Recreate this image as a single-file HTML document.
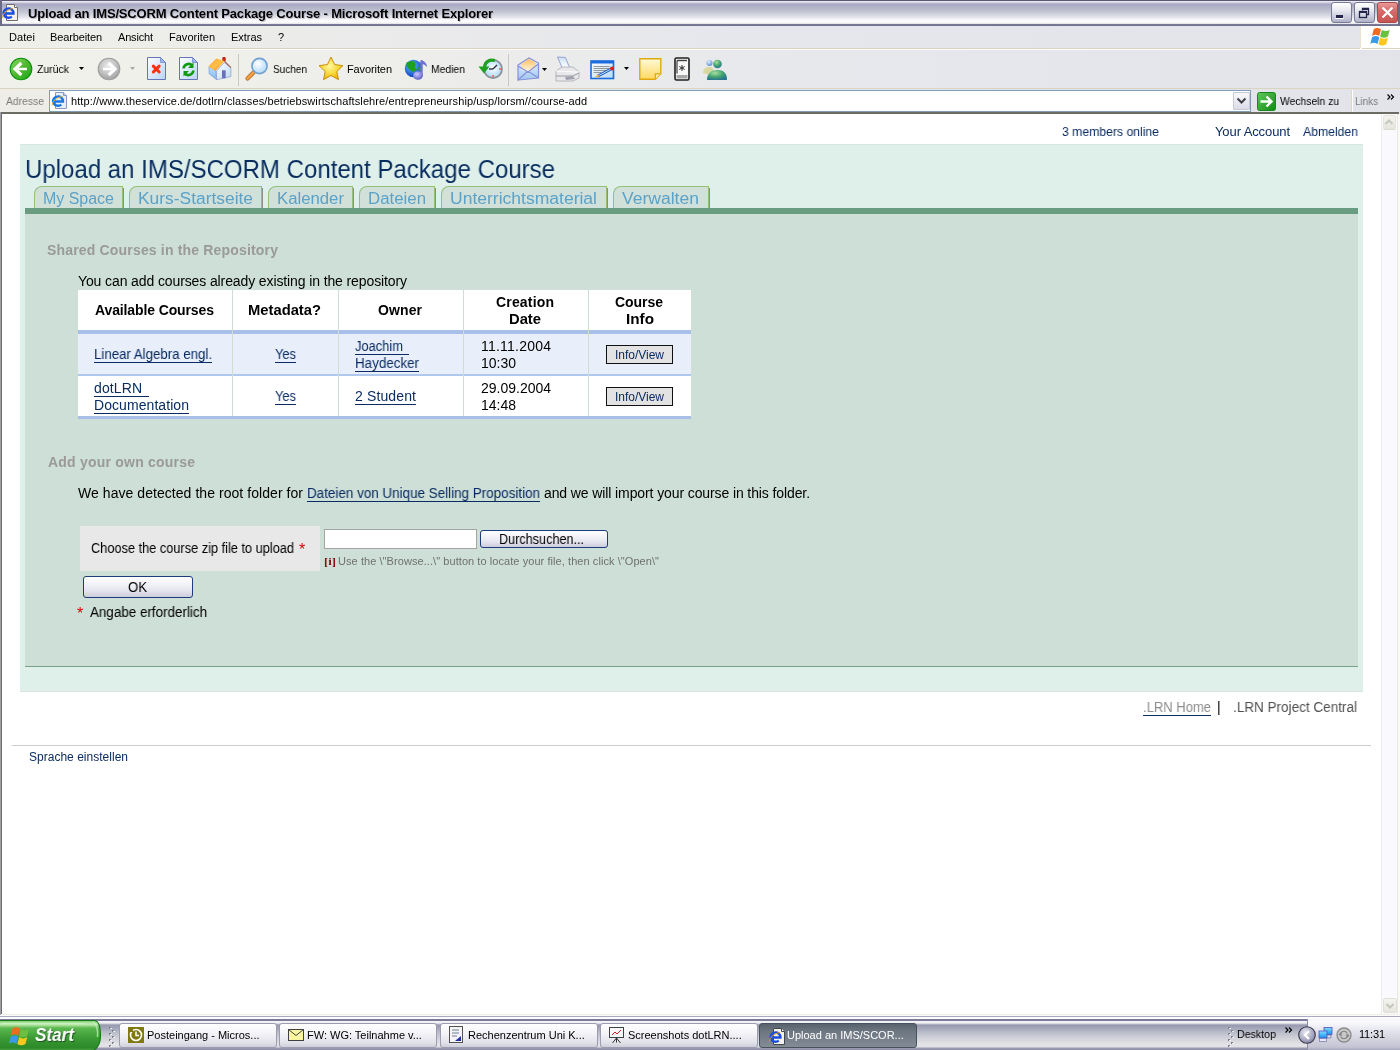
<!DOCTYPE html>
<html><head><meta charset="utf-8"><title>Upload an IMS/SCORM Content Package Course</title>
<style>
*{margin:0;padding:0;box-sizing:border-box}
html,body{width:1400px;height:1050px;overflow:hidden;background:#fff;font-family:"Liberation Sans",sans-serif;font-size:11px;color:#000}
.a{position:absolute;white-space:nowrap;will-change:transform}
svg{position:absolute;overflow:visible}
</style></head><body>
<div class="a" style="left:0px;top:0px;width:1400px;height:26px;background:linear-gradient(#5a5870 0,#5a5870 1px,#f0f0f6 1px,#e0e0ea 2px,#a8a8c4 4px,#b0b2c6 7px,#c4c6d4 12px,#e2e3ea 17px,#f8f8fc 20px,#fff 22px,#ececee 23px,#e4e4e8 24px,#808098 24px,#727292 25px,#727292 26px)"></div>
<div class="a" style="left:0px;top:0px;width:2px;height:26px;background:#6a6a84"></div>
<div class="a" style="left:1398px;top:0px;width:2px;height:26px;background:#6a6a84"></div>
<svg style="left:1px;top:4px" width="19" height="18" viewBox="0 0 19 18">
<path d="M5.5 .5h8l3 3v13h-11z" fill="#f4f2ea" stroke="#6c6c6c"/>
<path d="M13.5 .5v3h3" fill="#fff" stroke="#6c6c6c"/>
<path d="M3 9.5h9.5A5 4.6 0 1 0 10.8 12.6" fill="none" stroke="#1a4ee0" stroke-width="2.4"/>
<path d="M1.5 13.5C2 9 6 5.5 12 4.5" stroke="#e8a020" stroke-width="1" fill="none"/>
</svg>
<div class="a" style="left:28px;top:7px;font-size:13px;line-height:13px;color:#000;font-weight:bold;letter-spacing:-0.165px;text-shadow:1px 1px 0 rgba(160,160,180,.6);">Upload an IMS/SCORM Content Package Course - Microsoft Internet Explorer</div>
<div class="a" style="left:1331px;top:2px;width:21px;height:21px;background:linear-gradient(#ffffff,#e8e8f0 40%,#c4c6d8 80%,#aeb0c6);border:1px solid #7a7a98;border-radius:3px;"></div>
<div class="a" style="left:1354px;top:2px;width:21px;height:21px;background:linear-gradient(#ffffff,#e8e8f0 40%,#c4c6d8 80%,#aeb0c6);border:1px solid #7a7a98;border-radius:3px;"></div>
<div class="a" style="left:1377px;top:2px;width:21px;height:21px;background:linear-gradient(#e89a98,#d66c6a 40%,#c85452);border:1px solid #a84848;border-radius:3px;"></div>
<svg style="left:1331px;top:2px" width="21" height="21"><rect x="5" y="13" width="7" height="3" fill="#24244a"/><path d="M4.5 16.5h8" stroke="#fff"/></svg>
<svg style="left:1354px;top:2px" width="21" height="21"><rect x="5.5" y="9.5" width="7" height="6" fill="none" stroke="#24244a" stroke-width="1.3"/><rect x="5" y="9" width="8" height="2" fill="#24244a"/><path d="M8.5 8.5v-2h6v6h-2" fill="none" stroke="#24244a" stroke-width="1.3"/><rect x="8" y="6" width="7" height="2" fill="#24244a"/></svg>
<svg style="left:1377px;top:2px" width="21" height="21"><path d="M5.5 5.5l10 10M15.5 5.5l-10 10" stroke="#fff" stroke-width="2.2"/></svg>
<div class="a" style="left:0px;top:26px;width:1400px;height:22px;background:linear-gradient(90deg,#efefea 0,#ebebea 300px,#e6e7ec 700px,#e3e4ea 1400px)"></div>
<div class="a" style="left:0px;top:48px;width:1360px;height:1px;background:#d9d4bf"></div>
<div class="a" style="left:0px;top:49px;width:1400px;height:1px;background:#fbfbfb"></div>
<div class="a" style="left:1360px;top:26px;width:40px;height:22px;background:#fff;border-left:1px solid #e8e4d0"></div>
<div class="a" style="left:1362px;top:48px;width:38px;height:1px;background:#d9d4bf"></div>
<div class="a" style="left:9px;top:32px;font-size:11px;line-height:11px;color:#000;letter-spacing:0.080px;">Datei</div>
<div class="a" style="left:50px;top:32px;font-size:11px;line-height:11px;color:#000;letter-spacing:-0.134px;">Bearbeiten</div>
<div class="a" style="left:118px;top:32px;font-size:11px;line-height:11px;color:#000;letter-spacing:-0.179px;">Ansicht</div>
<div class="a" style="left:169px;top:32px;font-size:11px;line-height:11px;color:#000;letter-spacing:0.018px;">Favoriten</div>
<div class="a" style="left:231px;top:32px;font-size:11px;line-height:11px;color:#000;letter-spacing:-0.035px;">Extras</div>
<div class="a" style="left:278px;top:32px;font-size:11px;line-height:11px;color:#000;">?</div>
<svg style="left:1370px;top:26px" width="22" height="19" viewBox="0 0 19 17">
<path d="M3 3c2-1.5 4-1.5 6.5 0l-1.6 6c-2.5-1.5-4.5-1.5-6.5 0z" fill="#f06a20"/>
<path d="M10.3 3.3c2.5 1.5 4.5 1.5 7 0l-1.6 6c-2.5 1.5-4.5 1.5-7 0z" fill="#6cc040"/>
<path d="M1.5 10c2-1.5 4-1.5 6.5 0l-1.6 6c-2.5-1.5-4.5-1.5-6.5 0z" fill="#3a9ae8"/>
<path d="M8.8 10.3c2.5 1.5 4.5 1.5 7 0l-1.6 6c-2.5 1.5-4.5 1.5-7 0z" fill="#f8c820"/>
</svg>
<div class="a" style="left:0px;top:50px;width:1400px;height:38px;background:linear-gradient(90deg,#f1f1ec 0,#eeeeea 350px,#e7e8ec 800px,#e3e4ea 1400px)"></div>
<div class="a" style="left:0px;top:88px;width:1400px;height:1px;background:#d9d4bf"></div>
<div class="a" style="left:238px;top:54px;width:1px;height:32px;background:#c8c8c4"></div>
<div class="a" style="left:508px;top:54px;width:1px;height:32px;background:#c8c8c4"></div>
<div class="a" style="left:37px;top:64px;font-size:11px;line-height:11px;color:#000;transform:scaleX(0.9518);transform-origin:0 0;">Zurück</div>
<div class="a" style="left:273px;top:64px;font-size:11px;line-height:11px;color:#000;transform:scaleX(0.9113);transform-origin:0 0;">Suchen</div>
<div class="a" style="left:347px;top:64px;font-size:11px;line-height:11px;color:#000;letter-spacing:-0.107px;">Favoriten</div>
<div class="a" style="left:431px;top:64px;font-size:11px;line-height:11px;color:#000;transform:scaleX(0.9424);transform-origin:0 0;">Medien</div>
<svg style="left:79px;top:67px" width="6" height="4"><path d="M0 0h5l-2.5 3z" fill="#000"/></svg>
<svg style="left:130px;top:67px" width="6" height="4"><path d="M0 0h5l-2.5 3z" fill="#a8a8a8"/></svg>
<svg style="left:542px;top:68px" width="6" height="4"><path d="M0 0h5l-2.5 3z" fill="#000"/></svg>
<svg style="left:624px;top:67px" width="6" height="4"><path d="M0 0h5l-2.5 3z" fill="#000"/></svg>
<svg style="left:9px;top:57px" width="24" height="24" viewBox="0 0 24 24">
<defs><linearGradient id="gb" x1="0" y1="0" x2="1" y2="1"><stop offset="0" stop-color="#8ad868"/><stop offset=".5" stop-color="#50b830"/><stop offset="1" stop-color="#18a818"/></linearGradient>
<radialGradient id="gf" cx="45%" cy="35%" r="65%"><stop offset="0" stop-color="#ececec"/><stop offset=".6" stop-color="#c2c2c2"/><stop offset="1" stop-color="#a0a0a0"/></radialGradient>
<linearGradient id="pg" x1="0" y1="0" x2="1" y2="1"><stop offset="0" stop-color="#ffffff"/><stop offset="1" stop-color="#b8d4f8"/></linearGradient></defs>
<circle cx="12" cy="12" r="10.8" fill="url(#gb)" stroke="#0a900a" stroke-width="1.1"/>
<path d="M12.4 6L6 12l6.4 6" stroke="#fff" stroke-width="3.1" fill="none" stroke-linejoin="miter"/>
<path d="M9 12h9" stroke="#fff" stroke-width="2.5"/>
</svg>
<svg style="left:97px;top:57px" width="24" height="24" viewBox="0 0 24 24">
<circle cx="12" cy="12" r="10.8" fill="url(#gf)" stroke="#a0a0a0" stroke-width="1.1"/>
<path d="M11.6 6L18 12l-6.4 6" stroke="#fff" stroke-width="3.1" fill="none"/>
<path d="M15 12H6" stroke="#fff" stroke-width="2.5"/>
</svg>
<svg style="left:147px;top:57px" width="20" height="24" viewBox="0 0 20 24">
<path d="M.5 .5h13l5 5v17H.5z" fill="url(#pg)" stroke="#6874b8"/>
<path d="M13.5 .5v5h5z" fill="#98b8f0" stroke="#6874b8" stroke-width=".6"/>
<path d="M6.3 9.1l5.9 5.9M12.2 9.1l-5.9 5.9" stroke="#ff3010" stroke-width="3" stroke-linecap="round"/>
</svg>
<svg style="left:179px;top:57px" width="20" height="24" viewBox="0 0 20 24">
<path d="M.5 .5h13l5 5v17H.5z" fill="url(#pg)" stroke="#6874b8"/>
<path d="M13.5 .5v5h5z" fill="#98b8f0" stroke="#6874b8" stroke-width=".6"/>
<path d="M4.6 11.5a5 5 0 0 1 8.6-3" stroke="#109a10" stroke-width="2.6" fill="none"/><path d="M14.5 5.5v5.5h-5.5z" fill="#109a10"/>
<path d="M14.4 13.5a5 5 0 0 1-8.6 3" stroke="#109a10" stroke-width="2.6" fill="none"/><path d="M4.5 19.5V14h5.5z" fill="#109a10"/>
</svg>
<svg style="left:204px;top:54px" width="30" height="30" viewBox="0 0 30 30">
<defs><linearGradient id="hr" x1="0" y1="0" x2="1" y2="1"><stop offset="0" stop-color="#ffa030"/><stop offset=".5" stop-color="#ffc048"/><stop offset="1" stop-color="#f08818"/></linearGradient>
<linearGradient id="hw" x1="0" y1="0" x2="1" y2="1"><stop offset="0" stop-color="#ffffff"/><stop offset="1" stop-color="#b8d8f0"/></linearGradient>
<linearGradient id="hl" x1="0" y1="0" x2="0" y2="1"><stop offset="0" stop-color="#b8e0ff"/><stop offset="1" stop-color="#80b8f0"/></linearGradient></defs>
<path d="M5 12.9L12 16.9 12.6 25.7 5.1 19.7z" fill="url(#hl)" stroke="#7090d0" stroke-width=".6"/>
<path d="M12.6 16.9L20.3 8.6 26.9 13.7V22.6L12.6 25.7z" fill="url(#hw)" stroke="#8090c8" stroke-width=".6"/>
<path d="M20.6 7.3L26.9 13.7" stroke="#a06050" stroke-width="1.2"/>
<rect x="18.3" y="2.9" width="3.4" height="4.6" rx="1" fill="#c02810"/>
<path d="M4.3 12.6L12.3 4.6 20.6 7.1 11.4 16.9z" fill="url(#hr)"/>
<rect x="18" y="16.3" width="3.7" height="8" fill="#6c70b8"/>
</svg>
<svg style="left:245px;top:57px" width="24" height="24" viewBox="0 0 24 24">
<defs><radialGradient id="sl" cx="40%" cy="35%" r="60%"><stop offset="0" stop-color="#ffffff"/><stop offset="1" stop-color="#b8dcf8"/></radialGradient></defs>
<path d="M2.5 21.5l6-6" stroke="#b86820" stroke-width="4.2" stroke-linecap="round"/>
<path d="M2.5 21.5l6-6" stroke="#f0a048" stroke-width="2.6" stroke-linecap="round"/>
<circle cx="14.5" cy="9" r="7.6" fill="url(#sl)" stroke="#70a0d0" stroke-width="1.6"/>
</svg>
<svg style="left:318px;top:56px" width="26" height="25" viewBox="0 0 26 25">
<defs><radialGradient id="st" cx="45%" cy="40%" r="60%"><stop offset="0" stop-color="#fff8a0"/><stop offset=".6" stop-color="#f8d838"/><stop offset="1" stop-color="#e8b010"/></radialGradient></defs>
<path d="M13 1l3.6 7.6 8.4 1-6.2 5.8 1.7 8.3L13 19.5l-7.5 4.2 1.7-8.3L1 9.6l8.4-1z" fill="url(#st)" stroke="#c89010" stroke-width="1"/>
</svg>
<svg style="left:404px;top:59px" width="26" height="22" viewBox="0 0 26 22">
<defs><radialGradient id="gl" cx="40%" cy="35%" r="65%"><stop offset="0" stop-color="#60c8ff"/><stop offset="1" stop-color="#1040c0"/></radialGradient>
<radialGradient id="nt" cx="40%" cy="35%" r="65%"><stop offset="0" stop-color="#c8c8ff"/><stop offset="1" stop-color="#6060c8"/></radialGradient></defs>
<circle cx="9.5" cy="9.5" r="8.7" fill="url(#gl)"/>
<path d="M3 3.5c3-2 6-2 8 0s-1 5 1 6-2 4-4 3-4-3-5-5-1-3 0-4z" fill="#20a020"/>
<path d="M14 8c2 0 4 1 4 3l-3 2z" fill="#20a020"/>
<path d="M17.5 1.5v15" stroke="#7070d0" stroke-width="2.4"/><path d="M17 1c3 1 6 3 6 7-2-2-3-3-5.5-3" fill="#7070d0"/>
<ellipse cx="14" cy="16.5" rx="5" ry="4.2" fill="url(#nt)"/>
</svg>
<svg style="left:477px;top:57px" width="26" height="24" viewBox="0 0 26 24">
<defs><radialGradient id="hc" cx="50%" cy="45%" r="55%"><stop offset="0" stop-color="#ffffff"/><stop offset="1" stop-color="#a8d8f8"/></radialGradient></defs>
<circle cx="16" cy="12" r="9" fill="url(#hc)" stroke="#909098" stroke-width="1.8"/>
<path d="M16 12l4-4" stroke="#303040" stroke-width="1.4"/><path d="M16 12h-4" stroke="#303040" stroke-width="1.4"/>
<circle cx="23" cy="12" r=".9" fill="#ff5030"/><circle cx="16" cy="19" r=".9" fill="#ff5030"/>
<path d="M18 3.5C12 2 8 5 7.5 10" stroke="#20a020" stroke-width="3.2" fill="none"/>
<path d="M1.5 9.5h11l-5.5 7z" fill="#20a020"/>
</svg>
<svg style="left:517px;top:57px" width="23" height="24" viewBox="0 0 23 24">
<defs><linearGradient id="ml" x1="0" y1="0" x2="0" y2="1"><stop offset="0" stop-color="#e8f4ff"/><stop offset="1" stop-color="#a0c8f0"/></linearGradient>
<linearGradient id="lt" x1="0" y1="0" x2="0" y2="1"><stop offset="0" stop-color="#f8c060"/><stop offset="1" stop-color="#fff8e8"/></linearGradient></defs>
<path d="M1 8l11-7 9.5 5v15L1 23z" fill="url(#ml)" stroke="#8890d8" stroke-width="1.2"/>
<path d="M4 7l8-5 7 4v5l-8 4-7-2z" fill="url(#lt)"/>
<path d="M1 23l9-8 3 .5 8.5 5.5" fill="none" stroke="#8890d8" stroke-width="1.2"/>
<path d="M1 9l10 6 10.5-8" fill="none" stroke="#8890d8" stroke-width="1.2"/>
</svg>
<svg style="left:555px;top:56px" width="25" height="26" viewBox="0 0 25 26">
<defs><linearGradient id="pp" x1="0" y1="0" x2="0" y2="1"><stop offset="0" stop-color="#c8e0f8"/><stop offset="1" stop-color="#ffffff"/></linearGradient></defs>
<path d="M2.5 1l8 .5 4 10H7z" fill="url(#pp)" stroke="#8890c8" stroke-width=".8"/>
<path d="M1 15l6-4h11l6 5v6l-6 3H1z" fill="#e8e8ec" stroke="#a8a8b0" stroke-width=".8"/>
<path d="M1 15l17 1 6 0" fill="none" stroke="#fff" stroke-width="1"/>
<path d="M1 20h17l6-3" fill="none" stroke="#9898a0" stroke-width="1"/>
<path d="M10 21l8-1 2 3-9 1z" fill="#a0a0b0"/>
</svg>
<svg style="left:590px;top:60px" width="25" height="20" viewBox="0 0 25 20">
<defs><linearGradient id="ed" x1="0" y1="0" x2="1" y2="1"><stop offset="0" stop-color="#ffffff"/><stop offset="1" stop-color="#b8d8f8"/></linearGradient></defs>
<rect x="1" y="1" width="22.5" height="17.5" fill="url(#ed)" stroke="#1a6ae0" stroke-width="1.6"/>
<rect x="1" y="1" width="22.5" height="2.5" fill="#1a6ae0"/>
<path d="M3.5 6.5h16M3.5 8.5h16M3.5 10.5h13M3.5 12.5h8" stroke="#8c8c90" stroke-width=".9"/>
<path d="M8 16l13-7" stroke="#2060d0" stroke-width="2.8"/><path d="M8 16l13-7" stroke="#c0d8f8" stroke-width="1"/>
<circle cx="22" cy="8.5" r="2" fill="#e02020"/>
<path d="M6.5 17.5l2-2.5" stroke="#e8b048" stroke-width="2.2"/>
</svg>
<svg style="left:639px;top:58px" width="23" height="22" viewBox="0 0 23 22">
<defs><linearGradient id="nn" x1="0" y1="0" x2="0" y2="1"><stop offset="0" stop-color="#fffad8"/><stop offset="1" stop-color="#ffd860"/></linearGradient></defs>
<path d="M.8 .8h21v15l-5.5 5.5H.8z" fill="url(#nn)" stroke="#e0a810" stroke-width="1.4"/>
<path d="M16.3 21.3v-5.5h5.5" fill="#ffe8a0" stroke="#e0a810" stroke-width="1.2"/>
</svg>
<svg style="left:674px;top:57px" width="16" height="24" viewBox="0 0 16 24">
<rect x="1" y="1" width="14" height="22" rx="1.5" fill="#f8f8f8" stroke="#202020" stroke-width="1.6"/>
<path d="M3 3.5h10" stroke="#404040" stroke-width="1.4"/><path d="M3 3.5v13" stroke="#404040" stroke-width="1.2"/>
<path d="M8 8v6M5.3 9.5l5.4 3M10.7 9.5l-5.4 3" stroke="#303030" stroke-width="1"/>
<rect x="2.5" y="18" width="11" height="3.5" fill="#a8a8a8"/>
</svg>
<svg style="left:702px;top:59px" width="25" height="21" viewBox="0 0 25 21">
<defs><radialGradient id="mg" cx="40%" cy="30%" r="70%"><stop offset="0" stop-color="#a8e0a0"/><stop offset=".6" stop-color="#40a070"/><stop offset="1" stop-color="#2a7890"/></radialGradient>
<radialGradient id="mb" cx="40%" cy="30%" r="70%"><stop offset="0" stop-color="#e0f0ff"/><stop offset="1" stop-color="#5a90d0"/></radialGradient></defs>
<circle cx="7.5" cy="4" r="3" fill="url(#mb)"/>
<path d="M1 14c0-4 3-6 6.5-6s4 2 4 4l-3 4z" fill="#d8d8a0"/>
<circle cx="15.5" cy="5" r="4.3" fill="url(#mg)"/>
<path d="M5 21c0-7 4.5-10 10.5-10S25 14 25 21z" fill="url(#mg)"/>
</svg>
<div class="a" style="left:0px;top:89px;width:1400px;height:23px;background:linear-gradient(90deg,#eeede7 0,#ebebe9 300px,#e6e7ec 700px,#e3e4ea 1400px)"></div>
<div class="a" style="left:6px;top:96px;font-size:11px;line-height:11px;color:#7c7c7c;transform:scaleX(0.9417);transform-origin:0 0;">Adresse</div>
<div class="a" style="left:49px;top:90px;width:1202px;height:22px;background:#fff;border:1px solid #7f9db9"></div>
<svg style="left:51px;top:92px" width="18" height="18" viewBox="0 0 18 18">
<path d="M4.5 .5h8l3 3v13h-11z" fill="#e8eef8" stroke="#8898c0"/>
<path d="M12.5 .5v3h3" fill="#c8d4f0" stroke="#8898c0"/>
<path d="M2.5 9.5h9.5A5 4.6 0 1 0 10.3 12.6" fill="none" stroke="#1a78e0" stroke-width="2.4"/>
<path d="M1 13.5C1.5 9 5.5 5.5 11.5 4.5" stroke="#f0b030" stroke-width="1" fill="none"/>
</svg>
<div class="a" style="left:71px;top:96px;font-size:11px;line-height:11px;color:#000;letter-spacing:0.096px;">http://www.theservice.de/dotlrn/classes/betriebswirtschaftslehre/entrepreneurship/usp/lorsm//course-add</div>
<div class="a" style="left:1233px;top:92px;width:17px;height:18px;background:linear-gradient(#f8f8fc,#dcdce8);border:1px solid #c4c8d8;border-radius:1px"></div>
<svg style="left:1236px;top:97px" width="11" height="8"><path d="M1.5 1.5l4 4 4-4" stroke="#404048" stroke-width="2" fill="none"/></svg>
<svg style="left:1257px;top:92px" width="19" height="19" viewBox="0 0 19 19">
<defs><linearGradient id="gg" x1="0" y1="0" x2="1" y2="1"><stop offset="0" stop-color="#60c860"/><stop offset="1" stop-color="#108a10"/></linearGradient></defs>
<rect x=".5" y=".5" width="18" height="18" rx="2" fill="url(#gg)" stroke="#188818"/>
<path d="M3.5 9.5h10M9.5 4.5l5 5-5 5" stroke="#fff" stroke-width="2.4" fill="none"/>
</svg>
<div class="a" style="left:1280px;top:96px;font-size:11px;line-height:11px;color:#000;transform:scaleX(0.9399);transform-origin:0 0;">Wechseln zu</div>
<div class="a" style="left:1351px;top:90px;width:1px;height:22px;background:#dcd8c4"></div>
<div class="a" style="left:1352px;top:90px;width:1px;height:22px;background:#fff"></div>
<div class="a" style="left:1355px;top:96px;font-size:11px;line-height:11px;color:#7c7c7c;transform:scaleX(0.8956);transform-origin:0 0;">Links</div>
<svg style="left:1387px;top:94px" width="9" height="7"><path d="M.5 .5l2.5 2.5-2.5 2.5M4 .5l2.5 2.5L4 5.5" stroke="#000" stroke-width="1.2" fill="none"/></svg>
<div class="a" style="left:0px;top:112px;width:1399px;height:2px;background:#6c6c62"></div>
<div class="a" style="left:0px;top:112px;width:1px;height:904px;background:#a09ea8"></div>
<div class="a" style="left:1px;top:112px;width:1px;height:902px;background:#6c6c62"></div>
<div class="a" style="left:1398px;top:114px;width:2px;height:902px;background:#fafaf4"></div>
<div class="a" style="left:1399px;top:112px;width:1px;height:2px;background:#e8e8ee"></div>
<div class="a" style="left:2px;top:114px;width:1379px;height:900px;background:#fff"></div>
<div class="a" style="left:1381px;top:114px;width:17px;height:900px;background:#fafafe;border-left:1px solid #ececf0;border-right:1px solid #e8e8e0"></div>
<div class="a" style="left:1383px;top:115px;width:13px;height:14px;background:linear-gradient(#f4f4ee,#e6e6de);border:1px solid #e4e4dc;border-radius:2px;box-shadow:0 1px 0 #d8dccc"></div>
<svg style="left:1384px;top:118px" width="10" height="8"><path d="M1.5 6l3.5-3.5L8.5 6" stroke="#c4c8bc" stroke-width="2" fill="none"/></svg>
<div class="a" style="left:1383px;top:998px;width:14px;height:15px;background:linear-gradient(#f4f4ee,#e6e6de);border:1px solid #e0e0d8;border-radius:2px"></div>
<svg style="left:1385px;top:1002px" width="10" height="8"><path d="M1.5 2l3.5 3.5L8.5 2" stroke="#c4c8bc" stroke-width="2" fill="none"/></svg>
<div class="a" style="left:1062px;top:125px;font-size:13px;line-height:13px;color:#0b2c62;transform:scaleX(0.9388);transform-origin:0 0;">3 members online</div>
<div class="a" style="left:1215px;top:125px;font-size:13px;line-height:13px;color:#0b2c62;letter-spacing:-0.103px;">Your Account</div>
<div class="a" style="left:1303px;top:125px;font-size:13px;line-height:13px;color:#0b2c62;transform:scaleX(0.9396);transform-origin:0 0;">Abmelden</div>
<div class="a" style="left:20px;top:144px;width:1343px;height:547px;background:#dff0eb;border-top:1px solid #d4e8e0"></div>
<div class="a" style="left:20px;top:691px;width:1343px;height:1px;background:#d8e4de"></div>
<div class="a" style="left:25px;top:156px;font-size:26px;line-height:26px;color:#082c5e;transform:scaleX(0.9238);transform-origin:0 0;">Upload an IMS/SCORM Content Package Course</div>
<div class="a" style="left:34px;top:186px;width:89px;height:23px;background:#d2e0da;border:1px solid #94c07a;border-bottom:none;border-top-left-radius:8px;"></div>
<div class="a" style="left:123px;top:188px;width:1px;height:21px;background:#8c8c8c"></div>
<div class="a" style="left:43px;top:191px;font-size:16px;line-height:16px;color:#5aa2c8;letter-spacing:-0.020px;">My Space</div>
<div class="a" style="left:129px;top:186px;width:133px;height:23px;background:#d2e0da;border:1px solid #94c07a;border-bottom:none;border-top-left-radius:8px;"></div>
<div class="a" style="left:262px;top:188px;width:1px;height:21px;background:#8c8c8c"></div>
<div class="a" style="left:138px;top:191px;font-size:16px;line-height:16px;color:#5aa2c8;transform:scaleX(1.0868);transform-origin:0 0;">Kurs-Startseite</div>
<div class="a" style="left:268px;top:186px;width:85px;height:23px;background:#d2e0da;border:1px solid #94c07a;border-bottom:none;border-top-left-radius:8px;"></div>
<div class="a" style="left:353px;top:188px;width:1px;height:21px;background:#8c8c8c"></div>
<div class="a" style="left:277px;top:191px;font-size:16px;line-height:16px;color:#5aa2c8;transform:scaleX(1.0461);transform-origin:0 0;">Kalender</div>
<div class="a" style="left:359px;top:186px;width:76px;height:23px;background:#d2e0da;border:1px solid #94c07a;border-bottom:none;border-top-left-radius:8px;"></div>
<div class="a" style="left:435px;top:188px;width:1px;height:21px;background:#8c8c8c"></div>
<div class="a" style="left:368px;top:191px;font-size:16px;line-height:16px;color:#5aa2c8;transform:scaleX(1.0517);transform-origin:0 0;">Dateien</div>
<div class="a" style="left:441px;top:186px;width:166px;height:23px;background:#d2e0da;border:1px solid #94c07a;border-bottom:none;border-top-left-radius:8px;"></div>
<div class="a" style="left:607px;top:188px;width:1px;height:21px;background:#8c8c8c"></div>
<div class="a" style="left:450px;top:191px;font-size:16px;line-height:16px;color:#5aa2c8;transform:scaleX(1.0949);transform-origin:0 0;">Unterrichtsmaterial</div>
<div class="a" style="left:613px;top:186px;width:96px;height:23px;background:#d2e0da;border:1px solid #94c07a;border-bottom:none;border-top-left-radius:8px;"></div>
<div class="a" style="left:709px;top:188px;width:1px;height:21px;background:#8c8c8c"></div>
<div class="a" style="left:622px;top:191px;font-size:16px;line-height:16px;color:#5aa2c8;transform:scaleX(1.0958);transform-origin:0 0;">Verwalten</div>
<div class="a" style="left:25px;top:208px;width:1333px;height:6px;background:#6a9c82"></div>
<div class="a" style="left:25px;top:214px;width:1333px;height:452px;background:#cddfd6"></div>
<div class="a" style="left:25px;top:666px;width:1333px;height:1px;background:#78a08a"></div>
<div class="a" style="left:47px;top:243px;font-size:14px;line-height:14px;color:#9a9a9a;font-weight:bold;letter-spacing:0.174px;">Shared Courses in the Repository</div>
<div class="a" style="left:78px;top:274px;font-size:14px;line-height:14px;color:#000;letter-spacing:-0.111px;">You can add courses already existing in the repository</div>
<div class="a" style="left:78px;top:290px;width:613px;height:127px;background:#fff"></div>
<div class="a" style="left:78px;top:334px;width:613px;height:41px;background:#e8effa"></div>
<div class="a" style="left:78px;top:330px;width:613px;height:4px;background:#a8c0e8"></div>
<div class="a" style="left:78px;top:374px;width:613px;height:2px;background:#b0c8ec"></div>
<div class="a" style="left:78px;top:416px;width:613px;height:3px;background:#a8c0e8"></div>
<div class="a" style="left:232px;top:290px;width:1px;height:126px;background:#d0dcd6"></div>
<div class="a" style="left:338px;top:290px;width:1px;height:126px;background:#d0dcd6"></div>
<div class="a" style="left:463px;top:290px;width:1px;height:126px;background:#d0dcd6"></div>
<div class="a" style="left:588px;top:290px;width:1px;height:126px;background:#d0dcd6"></div>
<div class="a" style="left:95px;top:303px;font-size:14px;line-height:14px;color:#000;font-weight:bold;letter-spacing:-0.117px;">Available Courses</div>
<div class="a" style="left:248px;top:303px;font-size:14px;line-height:14px;color:#000;font-weight:bold;transform:scaleX(1.0544);transform-origin:0 0;">Metadata?</div>
<div class="a" style="left:378px;top:303px;font-size:14px;line-height:14px;color:#000;font-weight:bold;letter-spacing:0.109px;">Owner</div>
<div class="a" style="left:496px;top:295px;font-size:14px;line-height:14px;color:#000;font-weight:bold;letter-spacing:0.173px;">Creation</div>
<div class="a" style="left:509px;top:312px;font-size:14px;line-height:14px;color:#000;font-weight:bold;transform:scaleX(1.0546);transform-origin:0 0;">Date</div>
<div class="a" style="left:615px;top:295px;font-size:14px;line-height:14px;color:#000;font-weight:bold;letter-spacing:-0.047px;">Course</div>
<div class="a" style="left:626px;top:312px;font-size:14px;line-height:14px;color:#000;font-weight:bold;transform:scaleX(1.0914);transform-origin:0 0;">Info</div>
<div class="a" style="left:94px;top:347px;font-size:14px;line-height:14px;color:#0b2c62;transform:scaleX(0.9475);transform-origin:0 0;">Linear Algebra engl.</div>
<div class="a" style="left:94px;top:362px;width:118px;height:1px;background:#0b2c62"></div>
<div class="a" style="left:275px;top:347px;font-size:14px;line-height:14px;color:#0b2c62;transform:scaleX(0.9195);transform-origin:0 0;">Yes</div>
<div class="a" style="left:275px;top:362px;width:21px;height:1px;background:#0b2c62"></div>
<div class="a" style="left:355px;top:339px;font-size:14px;line-height:14px;color:#0b2c62;transform:scaleX(0.9208);transform-origin:0 0;">Joachim</div>
<div class="a" style="left:355px;top:354px;width:54px;height:1px;background:#0b2c62"></div>
<div class="a" style="left:355px;top:356px;font-size:14px;line-height:14px;color:#0b2c62;transform:scaleX(0.9564);transform-origin:0 0;">Haydecker</div>
<div class="a" style="left:355px;top:371px;width:64px;height:1px;background:#0b2c62"></div>
<div class="a" style="left:481px;top:339px;font-size:14px;line-height:14px;color:#000;letter-spacing:0.223px;">11.11.2004</div>
<div class="a" style="left:481px;top:356px;font-size:14px;line-height:14px;color:#000;">10:30</div>
<div class="a" style="left:94px;top:381px;font-size:14px;line-height:14px;color:#0b2c62;letter-spacing:0.106px;">dotLRN</div>
<div class="a" style="left:94px;top:396px;width:55px;height:1px;background:#0b2c62"></div>
<div class="a" style="left:94px;top:398px;font-size:14px;line-height:14px;color:#0b2c62;letter-spacing:0.070px;">Documentation</div>
<div class="a" style="left:94px;top:413px;width:95px;height:1px;background:#0b2c62"></div>
<div class="a" style="left:275px;top:389px;font-size:14px;line-height:14px;color:#0b2c62;transform:scaleX(0.9195);transform-origin:0 0;">Yes</div>
<div class="a" style="left:275px;top:404px;width:21px;height:1px;background:#0b2c62"></div>
<div class="a" style="left:355px;top:389px;font-size:14px;line-height:14px;color:#0b2c62;letter-spacing:0.133px;">2 Student</div>
<div class="a" style="left:355px;top:404px;width:61px;height:1px;background:#0b2c62"></div>
<div class="a" style="left:481px;top:381px;font-size:14px;line-height:14px;color:#000;">29.09.2004</div>
<div class="a" style="left:481px;top:398px;font-size:14px;line-height:14px;color:#000;">14:48</div>
<div class="a" style="left:606px;top:345px;width:67px;height:19px;background:#e2e2e2;border:1px solid #101010"></div>
<div class="a" style="left:615px;top:349px;font-size:12px;line-height:12px;color:#0b2c62;letter-spacing:-0.018px;">Info/View</div>
<div class="a" style="left:606px;top:387px;width:67px;height:19px;background:#e2e2e2;border:1px solid #101010"></div>
<div class="a" style="left:615px;top:391px;font-size:12px;line-height:12px;color:#0b2c62;letter-spacing:-0.018px;">Info/View</div>
<div class="a" style="left:48px;top:455px;font-size:14px;line-height:14px;color:#9a9a9a;font-weight:bold;letter-spacing:0.215px;">Add your own course</div>
<div class="a" style="left:78px;top:486px;font-size:14px;line-height:14px;color:#000;letter-spacing:0.054px;">We have detected the root folder for</div>
<div class="a" style="left:307px;top:486px;font-size:14px;line-height:14px;color:#0b2c62;transform:scaleX(0.9596);transform-origin:0 0;">Dateien von Unique Selling Proposition</div>
<div class="a" style="left:307px;top:501px;width:233px;height:1px;background:#0b2c62"></div>
<div class="a" style="left:544px;top:486px;font-size:14px;line-height:14px;color:#000;letter-spacing:-0.106px;">and we will import your course in this folder.</div>
<div class="a" style="left:80px;top:526px;width:240px;height:45px;background:#e8e8e8"></div>
<div class="a" style="left:91px;top:541px;font-size:14px;line-height:14px;color:#000;transform:scaleX(0.9120);transform-origin:0 0;">Choose the course zip file to upload</div>
<div class="a" style="left:299px;top:542px;font-size:16px;line-height:16px;color:#e00000;">*</div>
<div class="a" style="left:324px;top:529px;width:153px;height:20px;background:#fff;border:1px solid #a4a4a4"></div>
<div class="a" style="left:480px;top:530px;width:128px;height:18px;background:linear-gradient(#ffffff,#f4f4fa 30%,#e4e4ee 70%,#ccccdc);border:1px solid #1c3c7c;border-radius:3px"></div>
<div class="a" style="left:499px;top:532px;font-size:14px;line-height:14px;color:#000;transform:scaleX(0.9027);transform-origin:0 0;">Durchsuchen...</div>
<div class="a" style="left:324px;top:556px;font-size:11px;line-height:11px;color:#801010;font-weight:bold;transform:scaleX(1.1558);transform-origin:0 0;font-family:'Liberation Serif',serif;">[i]</div>
<div class="a" style="left:338px;top:556px;font-size:11px;line-height:11px;color:#707070;letter-spacing:0.067px;">Use the \"Browse...\" button to locate your file, then click \"Open\"</div>
<div class="a" style="left:83px;top:576px;width:110px;height:22px;background:linear-gradient(#ffffff,#f4f4fa 30%,#e4e4ee 70%,#ccccdc);border:1px solid #1c3c7c;border-radius:3px"></div>
<div class="a" style="left:128px;top:580px;font-size:14px;line-height:14px;color:#000;transform:scaleX(0.9393);transform-origin:0 0;">OK</div>
<div class="a" style="left:77px;top:606px;font-size:16px;line-height:16px;color:#e00000;">*</div>
<div class="a" style="left:90px;top:605px;font-size:14px;line-height:14px;color:#000;transform:scaleX(0.9576);transform-origin:0 0;">Angabe erforderlich</div>
<div class="a" style="left:1143px;top:700px;font-size:14px;line-height:14px;color:#8c8c8c;transform:scaleX(0.9298);transform-origin:0 0;">.LRN Home</div>
<div class="a" style="left:1143px;top:715px;width:68px;height:1px;background:#0b2c62"></div>
<div class="a" style="left:1217px;top:700px;font-size:14px;line-height:14px;color:#000;">|</div>
<div class="a" style="left:1233px;top:700px;font-size:14px;line-height:14px;color:#505050;transform:scaleX(0.9659);transform-origin:0 0;">.LRN Project Central</div>
<div class="a" style="left:12px;top:745px;width:1359px;height:1px;background:#cccccc"></div>
<div class="a" style="left:29px;top:751px;font-size:12px;line-height:12px;color:#0b2c62;letter-spacing:0.016px;">Sprache einstellen</div>
<div class="a" style="left:2px;top:1014px;width:1396px;height:1px;background:#f0f0e4"></div>
<div class="a" style="left:0px;top:1015px;width:1400px;height:35px;background:linear-gradient(#fafafa 0,#fafafa 1px,#a8a8c0 1px,#a8a8c0 2px,#fcfcff 2px,#fcfcff 4px,#7c7c98 4px,#7c7c98 6px,#f4f4f8 6px,#f0f0f4 8px,#9898b0 10px,#a8aabc 14px,#b8bcc8 17px,#d0d0d8 23px,#e4e4e8 30px,#e0e0e4 32px,#9c9cb4 33px,#8c8ca4 35px)"></div>
<svg style="left:0;top:1019px" width="101" height="31" viewBox="0 0 101 31">
<defs><linearGradient id="sg" x1="0" y1="0" x2="0" y2="1"><stop offset="0" stop-color="#7ac86a"/><stop offset=".12" stop-color="#c8f0b8"/><stop offset=".25" stop-color="#5cb850"/><stop offset=".6" stop-color="#3a9a34"/><stop offset=".9" stop-color="#2c8a28"/><stop offset="1" stop-color="#4aa040"/></linearGradient></defs>
<path d="M-1 1.5H95C99 2.5 100.5 10 100.5 16.5 100.5 23 98.5 29 93 31.5H-1z" fill="url(#sg)" stroke="#18781a" stroke-width="1.2"/><path d="M93 3C97 6 98 12 97.5 18" stroke="#c8f0c0" stroke-width="1.5" fill="none" opacity=".7"/><path d="M2 4.5H85" stroke="#d8f8d0" stroke-width="1" opacity=".6"/>
</svg>
<svg style="left:9px;top:1025px" width="22" height="20" viewBox="0 0 19 17">
<path d="M3 3c2-1.5 4-1.5 6.5 0l-1.6 6c-2.5-1.5-4.5-1.5-6.5 0z" fill="#f06a20"/>
<path d="M10.3 3.3c2.5 1.5 4.5 1.5 7 0l-1.6 6c-2.5 1.5-4.5 1.5-7 0z" fill="#6cc040"/>
<path d="M1.5 10c2-1.5 4-1.5 6.5 0l-1.6 6c-2.5-1.5-4.5-1.5-6.5 0z" fill="#3a9ae8"/>
<path d="M8.8 10.3c2.5 1.5 4.5 1.5 7 0l-1.6 6c-2.5 1.5-4.5 1.5-7 0z" fill="#f8c820"/>
</svg>
<div class="a" style="left:35px;top:1025px;font-size:19px;line-height:19px;color:#fff;font-weight:bold;transform:scaleX(0.9009);transform-origin:0 0;font-style:italic;text-shadow:1px 1px 1px #205020;">Start</div>
<div class="a" style="left:109px;top:1027px;width:2px;height:2px;background:#80808c"></div>
<div class="a" style="left:110px;top:1028px;width:2px;height:1px;background:#fff;opacity:.8"></div>
<div class="a" style="left:112px;top:1030px;width:2px;height:2px;background:#80808c"></div>
<div class="a" style="left:113px;top:1031px;width:2px;height:1px;background:#fff;opacity:.8"></div>
<div class="a" style="left:109px;top:1033px;width:2px;height:2px;background:#80808c"></div>
<div class="a" style="left:110px;top:1034px;width:2px;height:1px;background:#fff;opacity:.8"></div>
<div class="a" style="left:112px;top:1036px;width:2px;height:2px;background:#80808c"></div>
<div class="a" style="left:113px;top:1037px;width:2px;height:1px;background:#fff;opacity:.8"></div>
<div class="a" style="left:109px;top:1039px;width:2px;height:2px;background:#80808c"></div>
<div class="a" style="left:110px;top:1040px;width:2px;height:1px;background:#fff;opacity:.8"></div>
<div class="a" style="left:112px;top:1042px;width:2px;height:2px;background:#80808c"></div>
<div class="a" style="left:113px;top:1043px;width:2px;height:1px;background:#fff;opacity:.8"></div>
<div class="a" style="left:109px;top:1045px;width:2px;height:2px;background:#80808c"></div>
<div class="a" style="left:110px;top:1046px;width:2px;height:1px;background:#fff;opacity:.8"></div>
<div class="a" style="left:119px;top:1023px;width:158px;height:25px;background:linear-gradient(#ffffff,#f4f4f8 40%,#e2e2ea 80%,#cfcfdb);border:1px solid #9c9cb0;border-radius:3px"></div>
<svg style="left:128px;top:1027px" width="16" height="16"><rect x="0" y="0" width="16" height="16" fill="#807810"/><circle cx="8" cy="8" r="5.5" fill="none" stroke="#fff" stroke-width="1.6"/><path d="M8 4.5v4h3" stroke="#fff" stroke-width="1.5" fill="none"/><rect x="1" y="1" width="4" height="4" fill="#807810"/></svg>
<div class="a" style="left:147px;top:1030px;font-size:11px;line-height:11px;color:#000;">Posteingang - Micros...</div>
<div class="a" style="left:279px;top:1023px;width:158px;height:25px;background:linear-gradient(#ffffff,#f4f4f8 40%,#e2e2ea 80%,#cfcfdb);border:1px solid #9c9cb0;border-radius:3px"></div>
<svg style="left:288px;top:1028px" width="18" height="14"><rect x=".5" y="1.5" width="15" height="11" fill="#f8f4a0" stroke="#404040"/><path d="M.5 1.5l7.5 6 7.5-6" fill="none" stroke="#404040"/></svg>
<div class="a" style="left:307px;top:1030px;font-size:11px;line-height:11px;color:#000;">FW: WG: Teilnahme v...</div>
<div class="a" style="left:440px;top:1023px;width:158px;height:25px;background:linear-gradient(#ffffff,#f4f4f8 40%,#e2e2ea 80%,#cfcfdb);border:1px solid #9c9cb0;border-radius:3px"></div>
<svg style="left:449px;top:1026px" width="16" height="18"><rect x=".5" y=".5" width="13" height="16" fill="#f4f4f4" stroke="#505050"/><path d="M3 4h7M3 7h7M3 10h5" stroke="#7080a0"/><path d="M6 15l6-5v5z" fill="#2030a0"/></svg>
<div class="a" style="left:468px;top:1030px;font-size:11px;line-height:11px;color:#000;">Rechenzentrum Uni K...</div>
<div class="a" style="left:600px;top:1023px;width:158px;height:25px;background:linear-gradient(#ffffff,#f4f4f8 40%,#e2e2ea 80%,#cfcfdb);border:1px solid #9c9cb0;border-radius:3px"></div>
<svg style="left:609px;top:1026px" width="16" height="18"><rect x=".5" y="1.5" width="14" height="10" fill="#f8f8f8" stroke="#404040"/><path d="M3 9l3-3 2 2 4-4" stroke="#d02020" fill="none"/><path d="M7.5 11.5v5M7.5 12l-4 5M7.5 12l4 5" stroke="#303030"/></svg>
<div class="a" style="left:628px;top:1030px;font-size:11px;line-height:11px;color:#000;">Screenshots dotLRN....</div>
<div class="a" style="left:759px;top:1023px;width:158px;height:25px;background:linear-gradient(#58626c,#6c7680 30%,#848c96);border:1px solid #48525c;border-radius:3px"></div>
<svg style="left:768px;top:1028px" width="19" height="18" viewBox="0 0 19 18"><path d="M5.5 .5h8l3 3v13h-11z" fill="#f4f2ea" stroke="#404850"/><path d="M13.5 .5v3h3" fill="#fff" stroke="#404850"/><path d="M3 9.5h9.5A5 4.6 0 1 0 10.8 12.6" fill="none" stroke="#1a4ee0" stroke-width="2.4"/><path d="M1.5 13.5C2 9 6 5.5 12 4.5" stroke="#e8a020" stroke-width="1" fill="none"/></svg>
<div class="a" style="left:787px;top:1030px;font-size:11px;line-height:11px;color:#fff;">Upload an IMS/SCOR...</div>
<div class="a" style="left:1228px;top:1027px;width:2px;height:2px;background:#80808c"></div>
<div class="a" style="left:1229px;top:1028px;width:2px;height:1px;background:#fff;opacity:.8"></div>
<div class="a" style="left:1231px;top:1030px;width:2px;height:2px;background:#80808c"></div>
<div class="a" style="left:1232px;top:1031px;width:2px;height:1px;background:#fff;opacity:.8"></div>
<div class="a" style="left:1228px;top:1033px;width:2px;height:2px;background:#80808c"></div>
<div class="a" style="left:1229px;top:1034px;width:2px;height:1px;background:#fff;opacity:.8"></div>
<div class="a" style="left:1231px;top:1036px;width:2px;height:2px;background:#80808c"></div>
<div class="a" style="left:1232px;top:1037px;width:2px;height:1px;background:#fff;opacity:.8"></div>
<div class="a" style="left:1228px;top:1039px;width:2px;height:2px;background:#80808c"></div>
<div class="a" style="left:1229px;top:1040px;width:2px;height:1px;background:#fff;opacity:.8"></div>
<div class="a" style="left:1231px;top:1042px;width:2px;height:2px;background:#80808c"></div>
<div class="a" style="left:1232px;top:1043px;width:2px;height:1px;background:#fff;opacity:.8"></div>
<div class="a" style="left:1228px;top:1045px;width:2px;height:2px;background:#80808c"></div>
<div class="a" style="left:1229px;top:1046px;width:2px;height:1px;background:#fff;opacity:.8"></div>
<div class="a" style="left:1237px;top:1029px;font-size:11px;line-height:11px;color:#000;transform:scaleX(0.9664);transform-origin:0 0;">Desktop</div>
<svg style="left:1285px;top:1027px" width="8" height="6"><path d="M.5 .5l2.5 2.5-2.5 2.5M4 .5l2.5 2.5L4 5.5" stroke="#000" stroke-width="1.2" fill="none"/></svg>
<div class="a" style="left:1307px;top:1019px;width:93px;height:31px;background:linear-gradient(#f4f4fa 0,#fafafe 3px,#e8e8f0 10px,#d0d0dc 22px,#c4c4d4 28px,#a8a8bc 31px);border-left:1px solid #8c8ca4"></div>
<svg style="left:1297px;top:1025px" width="20" height="20"><defs><radialGradient id="tc" cx="40%" cy="35%" r="65%"><stop offset="0" stop-color="#e8e8f4"/><stop offset="1" stop-color="#8c8cac"/></radialGradient></defs><circle cx="10" cy="10" r="8.3" fill="url(#tc)" stroke="#383848" stroke-width="1.1"/><path d="M12 6l-4 4 4 4" stroke="#fff" stroke-width="2.2" fill="none"/></svg>
<svg style="left:1318px;top:1027px" width="16" height="16" viewBox="0 0 16 16"><defs><linearGradient id="nw" x1="0" y1="0" x2="0" y2="1"><stop offset="0" stop-color="#80e0ff"/><stop offset="1" stop-color="#1890f0"/></linearGradient></defs>
<rect x="6" y="0.5" width="8" height="7" fill="url(#nw)" stroke="#5050c0" stroke-width=".8"/><path d="M7 8h6v3H7z" fill="#d8d8f0" stroke="#6060a0" stroke-width=".6"/>
<rect x="1" y="4" width="8" height="7" fill="url(#nw)" stroke="#5050c0" stroke-width=".8"/><path d="M1.5 11.5h7v3h-7z" fill="#e8e8f8" stroke="#6060a0" stroke-width=".6"/></svg>
<svg style="left:1336px;top:1027px" width="16" height="16"><circle cx="8" cy="8" r="7" fill="#c8c8c8" stroke="#8c8c8c" stroke-width="1.4"/><path d="M5 9.5V6l-2 2M11 6.5V10l2-2" stroke="#808080" stroke-width="1.2" fill="none"/><path d="M5 6a3.5 3.5 0 0 1 6 0M11 10a3.5 3.5 0 0 1-6 0" stroke="#808080" stroke-width="1.1" fill="none"/></svg>
<div class="a" style="left:1359px;top:1029px;font-size:11px;line-height:11px;color:#000;letter-spacing:-0.178px;">11:31</div>
</body></html>
